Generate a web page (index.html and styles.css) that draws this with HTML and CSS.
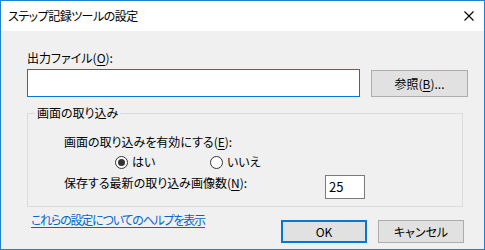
FILE: index.html
```html
<!DOCTYPE html>
<html lang="ja">
<head>
    <meta charset="UTF-8">
    <title>ステップ記録ツールの設定</title>
    <link rel="stylesheet" href="styles.css">
</head>
<body>
    <div class="ventana">
        <!-- Barra de título -->
        <div class="titulo">
            <span>ステップ記録ツールの設定</span>
            <svg class="cerrar" width="10" height="10" viewBox="0 0 10 10">
                <path d="M0.5 0.5 L9.5 9.5 M9.5 0.5 L0.5 9.5" stroke="#000" stroke-width="1.1" fill="none"/>
            </svg>
        </div>

        <div class="contenido">
            <div class="etiqueta">出力ファイル(<u>O</u>):</div>
            <div class="fila-archivo">
                <div class="caja-archivo"></div>
                <button class="boton boton-ref">参照(<u>B</u>)...</button>
            </div>

            <!-- Grupo de captura de pantalla -->
            <fieldset class="grupo">
                <legend>画面の取り込み</legend>
                <div class="texto">画面の取り込みを有効にする(<u>E</u>):</div>
                <div class="radios">
                    <div class="radio">
                        <svg width="13" height="13" viewBox="0 0 13 13">
                            <circle cx="6.5" cy="6.5" r="6" fill="#fff" stroke="#333"/>
                            <circle cx="6.5" cy="6.5" r="3.5" fill="#333"/>
                        </svg>
                        <span>はい</span>
                    </div>
                    <div class="radio">
                        <svg width="13" height="13" viewBox="0 0 13 13">
                            <circle cx="6.5" cy="6.5" r="6" fill="#fff" stroke="#333"/>
                        </svg>
                        <span>いいえ</span>
                    </div>
                </div>
                <div class="fila-numero">
                    <div class="texto">保存する最新の取り込み画像数(<u>N</u>):</div>
                    <div class="caja-numero">25</div>
                </div>
            </fieldset>

            <div class="fila-final">
                <a class="ayuda" href="#">これらの設定についてのヘルプを表示</a>
                <div class="botones">
                    <button class="boton boton-ok">OK</button>
                    <button class="boton">キャンセル</button>
                </div>
            </div>
        </div>
    </div>
</body>
</html>
```

FILE: styles.css
```css
* {
    margin: 0;
    padding: 0;
    box-sizing: border-box;
}

body {
    font-family: "Noto Sans CJK JP", "Noto Sans", sans-serif;
    font-size: 12px;
    line-height: 16px;
    font-feature-settings: "palt";
    color: #000;
    background: #fff;
}

.ventana {
    width: 485px;
    height: 250px;
    border: 1px solid #1883d7;
    background-color: #f0f0f0;
}

.titulo {
    height: 30px;
    background-color: #fff;
    display: flex;
    align-items: center;
    justify-content: space-between;
    padding: 0 10px 0 7px;
    letter-spacing: -0.5px;
}

.contenido {
    padding: 19px 16px 0 26px;
}

.etiqueta {
    height: 16px;
}

u {
    text-decoration: underline;
    text-underline-offset: 2px;
}

.fila-archivo {
    display: flex;
    align-items: flex-start;
    margin-top: 3px;
}

.caja-archivo {
    width: 333px;
    height: 28px;
    border: 1px solid #0078d7;
    background-color: #fff;
}

.boton {
    font-family: inherit;
    font-size: 12px;
    font-feature-settings: "palt";
    color: #000;
    width: 86px;
    height: 23px;
    border: 1px solid #adadad;
    background-color: #e1e1e1;
}

.boton-ref {
    width: 97px;
    height: 27px;
    margin-top: 1px;
    margin-left: 11px;
}

.boton-ok {
    border: 2px solid #0078d7;
}

/* Grupo */
.grupo {
    width: 436px;
    margin-top: 8px;
    border: 1px solid #dcdcdc;
    padding: 13px 0 7px 36px;
}

.grupo legend {
    margin-left: -29px;
    padding: 0 2px;
    line-height: 16px;
}

.texto {
    height: 16px;
}

.radios {
    display: flex;
    margin-top: 4px;
    padding-left: 51px;
}

.radio {
    width: 95px;
    display: flex;
    align-items: center;
    gap: 4px;
}

.radio svg {
    display: block;
}

.fila-numero {
    display: flex;
    align-items: flex-start;
    margin-top: 5px;
}

.fila-numero .texto {
    width: 261px;
}

.caja-numero {
    width: 40px;
    height: 24px;
    border: 1px solid #7a7a7a;
    background-color: #fff;
    padding: 3px 0 0 3px;
    font-size: 13px;
}

.fila-final {
    display: flex;
    justify-content: space-between;
    align-items: flex-start;
    margin-top: 5px;
    padding-left: 4px;
}

.ayuda {
    color: #0066cc;
    text-decoration: underline;
    text-underline-offset: 2px;
    letter-spacing: -1.2px;
}

.botones {
    display: flex;
    gap: 11px;
    margin-top: 8px;
    margin-right: 4px;
}
```
